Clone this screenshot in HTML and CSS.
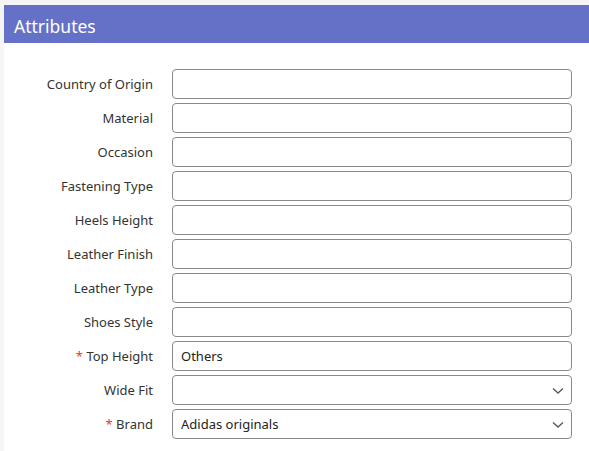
FILE: index.html
```html
<!DOCTYPE html>
<html>
<head>
<meta charset="utf-8">
<link rel="stylesheet" href="styles.css">
</head>
<body>
<div class="card">
  <div class="card-header">Attributes</div>
  <div class="form">
    <label class="label">Country of Origin</label><div class="field"></div>
    <label class="label">Material</label><div class="field"></div>
    <label class="label">Occasion</label><div class="field"></div>
    <label class="label">Fastening Type</label><div class="field"></div>
    <label class="label">Heels Height</label><div class="field"></div>
    <label class="label">Leather Finish</label><div class="field"></div>
    <label class="label">Leather Type</label><div class="field"></div>
    <label class="label">Shoes Style</label><div class="field"></div>
    <label class="label"><span class="req">*</span> Top Height</label><div class="field">Others</div>
    <label class="label">Wide Fit</label><div class="field select"><svg class="chev" width="12" height="8" viewBox="0 0 12 8"><path d="M1 1.5 L6 6 L11 1.5" fill="none" stroke="#5a5a5a" stroke-width="1.4"/></svg></div>
    <label class="label"><span class="req">*</span> Brand</label><div class="field select">Adidas originals<svg class="chev" width="12" height="8" viewBox="0 0 12 8"><path d="M1 1.5 L6 6 L11 1.5" fill="none" stroke="#5a5a5a" stroke-width="1.4"/></svg></div>
  </div>
</div>
</body>
</html>
```
FILE: styles.css
```css
html, body {
  margin: 0;
  padding: 0;
  background: #f5f5f5;
  font-family: "Noto Sans", "Open Sans", sans-serif;
}
.card {
  margin: 5px 0 0 4px;
  background: #fff;
  height: 446px;
}
.card-header {
  box-sizing: border-box;
  height: 38px;
  background: #6471c6;
  color: #fff;
  font-size: 17.5px;
  line-height: 38px;
  padding: 2px 0 0 10px;
}
.form {
  display: grid;
  grid-template-columns: 149px 400px;
  column-gap: 19px;
  row-gap: 4px;
  padding-top: 26px;
}
.label {
  text-align: right;
  font-size: 13px;
  color: #333;
  line-height: 30px;
}
.req {
  color: #e53935;
}
.field {
  box-sizing: border-box;
  height: 30px;
  border: 1px solid #8a8a8a;
  border-radius: 4px;
  padding: 0 8px;
  font-size: 13px;
  color: #222;
  line-height: 28px;
  position: relative;
}
.chev {
  position: absolute;
  right: 7px;
  top: 11px;
}
```
